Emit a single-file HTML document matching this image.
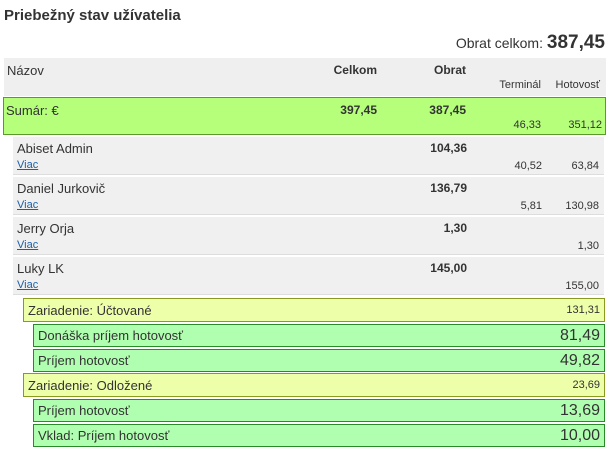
<!DOCTYPE html>
<html><head><meta charset="utf-8"><style>
body{margin:0;background:#fff;font-family:"Liberation Sans",Arial,sans-serif;color:#333;width:611px;height:460px;position:relative;overflow:hidden}
div{position:absolute;box-sizing:border-box}
.t{white-space:nowrap}
.u{background:#f0f0f0;left:13px;width:591px;height:38px;border-bottom:1px solid #ddd}
.u .n{left:4px;top:4px;font-size:13px}
.u .v{left:4px;top:22px;font-size:11px;color:#1a5fa8;text-decoration:underline}
.u .o{right:137px;top:4px;font-size:12px;font-weight:bold}
.u .a{right:62px;top:23px;font-size:11px}
.u .b{right:5px;top:23px;font-size:11px}
.y{left:23px;width:582px;height:24px;background:#eeffaa;border:1px solid #8a9a20}
.y .n{left:4px;top:4px;font-size:13px}
.y .b{right:4px;top:5px;font-size:11px}
.g{left:33px;width:572px;height:23px;background:#b0ffb0;border:1px solid #2a8a2a}
.g .n{left:4px;top:3px;font-size:13px}
.g .b{right:4px;top:2px;font-size:16px}
</style></head><body>
<div class="t" style="left:4px;top:7px;font-size:15px;font-weight:bold;color:#333">Priebežný stav užívatelia</div>
<div class="t" style="right:6px;top:32px;font-size:14px">Obrat celkom: <span style="font-size:19px;font-weight:bold">387,45</span></div>
<div style="left:4px;top:58px;width:602px;height:38px;background:#efefef">
 <div class="t" style="left:3px;top:5px;font-size:13px">Názov</div>
 <div class="t" style="right:229px;top:5px;font-size:12px;font-weight:bold">Celkom</div>
 <div class="t" style="right:140px;top:5px;font-size:12px;font-weight:bold">Obrat</div>
 <div class="t" style="right:65px;top:21px;font-size:11px">Terminál</div>
 <div class="t" style="right:6px;top:21px;font-size:11px">Hotovosť</div>
</div>
<div style="left:3px;top:97px;width:603px;height:38px;background:#b5ff7a;border:1px solid #5a9a2a">
 <div class="t" style="left:2px;top:5px;font-size:13px">Sumár: €</div>
 <div class="t" style="right:228px;top:5px;font-size:12px;font-weight:bold">397,45</div>
 <div class="t" style="right:139px;top:5px;font-size:12px;font-weight:bold">387,45</div>
 <div class="t" style="right:64px;top:21px;font-size:11px">46,33</div>
 <div class="t" style="right:3px;top:21px;font-size:11px">351,12</div>
</div>
<div class="u" style="top:137px"><div class="t n">Abiset Admin</div><div class="t v">Viac</div><div class="t o">104,36</div><div class="t a">40,52</div><div class="t b">63,84</div></div>
<div class="u" style="top:177px"><div class="t n">Daniel Jurkovič</div><div class="t v">Viac</div><div class="t o">136,79</div><div class="t a">5,81</div><div class="t b">130,98</div></div>
<div class="u" style="top:217px"><div class="t n">Jerry Orja</div><div class="t v">Viac</div><div class="t o">1,30</div><div class="t b">1,30</div></div>
<div class="u" style="top:257px"><div class="t n">Luky LK</div><div class="t v">Viac</div><div class="t o">145,00</div><div class="t b">155,00</div></div>
<div class="y" style="top:298px"><div class="t n">Zariadenie: Účtované</div><div class="t b">131,31</div></div>
<div class="g" style="top:324px"><div class="t n">Donáška príjem hotovosť</div><div class="t b">81,49</div></div>
<div class="g" style="top:349px"><div class="t n">Príjem hotovosť</div><div class="t b">49,82</div></div>
<div class="y" style="top:373px"><div class="t n">Zariadenie: Odložené</div><div class="t b">23,69</div></div>
<div class="g" style="top:399px"><div class="t n">Príjem hotovosť</div><div class="t b">13,69</div></div>
<div class="g" style="top:424px"><div class="t n">Vklad: Príjem hotovosť</div><div class="t b">10,00</div></div>
</body></html>
